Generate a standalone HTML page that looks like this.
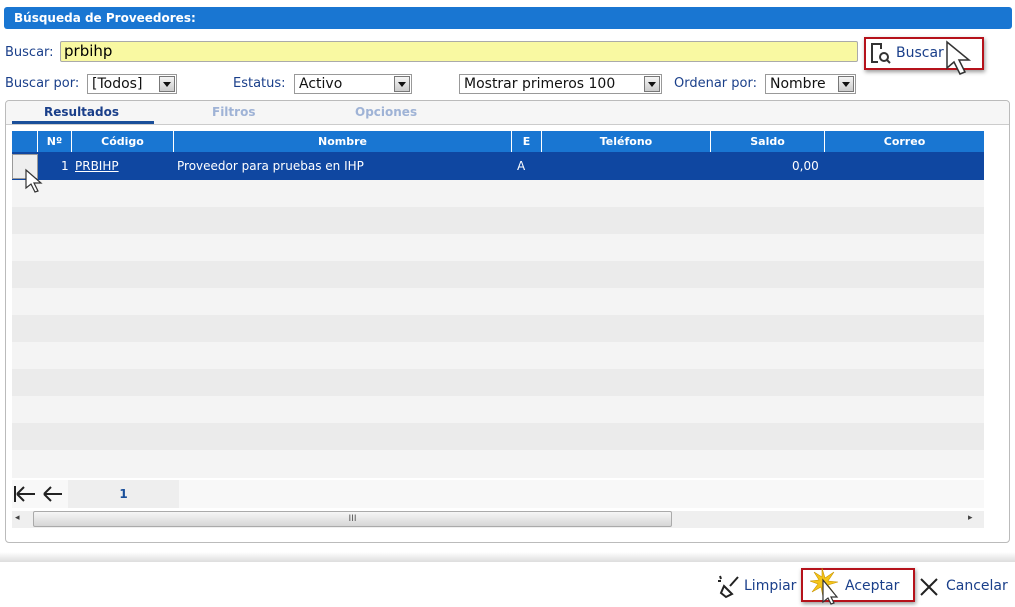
<!DOCTYPE html>
<html><head><meta charset="utf-8"><style>
body{margin:0;width:1015px;height:607px;background:#fff;font-family:Verdana,"DejaVu Sans",sans-serif;position:relative;overflow:hidden;font-size:13px}
.a{position:absolute}
.title{left:4px;top:7px;width:1008px;height:22px;background:#1976d2;border-radius:3px;color:#fff;font-weight:bold;font-size:12px;line-height:22px;text-indent:10px}
.lbl{color:#1a3f8a;font-size:13px}
.sel{border:1px solid #999;background:#fff;height:20px;font-size:14px;line-height:19px;padding-left:4px;box-sizing:border-box;color:#111}
.sel i{position:absolute;right:1px;top:1px;width:16px;height:16px;border:1px solid #777;background:linear-gradient(#f4f4f4,#ccc);box-sizing:border-box}
.sel i:after{content:"";position:absolute;left:3px;top:5px;border-left:4px solid transparent;border-right:4px solid transparent;border-top:5px solid #111}
.hdr div{position:absolute;top:131px;height:21px;background:#1976d2;color:#fff;font-weight:bold;font-size:11px;line-height:21px;text-align:center;border-right:1px solid #fff;box-sizing:border-box}
.row{position:absolute;left:12px;width:972px;height:27px}
</style></head><body>
<div class="a title">Búsqueda de Proveedores:</div>
<div class="a lbl" style="left:5px;top:45px">Buscar:</div>
<div class="a" style="left:60px;top:41px;width:798px;height:21px;background:#f9f9a2;border:1px solid #aaa;border-radius:2px;box-sizing:border-box;font-size:15px;line-height:19px;padding-left:3px">prbihp</div>
<div class="a" style="left:864px;top:37px;width:120px;height:33px;border:2px solid #b5121b;box-sizing:border-box;box-shadow:1px 2px 4px #999"></div>
<svg class="a" style="left:870px;top:42px" width="24" height="24" viewBox="0 0 24 24"><path d="M8 20H2V2h9v5" fill="none" stroke="#333" stroke-width="2"/><circle cx="14" cy="15" r="4" fill="none" stroke="#333" stroke-width="2"/><path d="M17 18l3 3" stroke="#333" stroke-width="2"/></svg>
<div class="a" style="left:896px;top:45px;color:#1a3f8a;font-size:14px">Buscar</div>
<svg class="a" style="left:944px;top:40px" width="34" height="38" viewBox="0 0 34 38"><path d="M3 2v26l7-6 6 12 5-2-6-12h10z" fill="#fff" stroke="#333" stroke-width="1.5"/></svg>
<div class="a lbl" style="left:5px;top:76px">Buscar por:</div>
<div class="a sel" style="left:87px;top:74px;width:90px">[Todos]<i></i></div>
<div class="a lbl" style="left:233px;top:76px">Estatus:</div>
<div class="a sel" style="left:294px;top:74px;width:118px">Activo<i></i></div>
<div class="a sel" style="left:459px;top:74px;width:203px">Mostrar primeros 100<i></i></div>
<div class="a lbl" style="left:674px;top:76px">Ordenar por:</div>
<div class="a sel" style="left:765px;top:74px;width:91px">Nombre<i></i></div>

<div class="a" style="left:5px;top:100px;width:1005px;height:443px;border:1px solid #bbb;border-radius:4px;box-sizing:border-box;background:#fff"></div>
<div class="a" style="left:6px;top:101px;width:1003px;height:23px;background:#f6f6f6;border-bottom:1px solid #ccc;border-radius:4px 4px 0 0"></div>
<div class="a" style="left:44px;top:105px;color:#1a3f8a;font-weight:bold;font-size:12px">Resultados</div>
<div class="a" style="left:12px;top:121px;width:142px;height:3px;background:#1a4f9a"></div>
<div class="a" style="left:212px;top:105px;color:#9fb3d6;font-weight:bold;font-size:12px">Filtros</div>
<div class="a" style="left:355px;top:105px;color:#9fb3d6;font-weight:bold;font-size:12px">Opciones</div>

<div class="hdr">
<div style="left:12px;width:26px"></div>
<div style="left:38px;width:34px">Nº</div>
<div style="left:72px;width:102px">Código</div>
<div style="left:174px;width:338px">Nombre</div>
<div style="left:512px;width:30px">E</div>
<div style="left:542px;width:169px">Teléfono</div>
<div style="left:711px;width:114px">Saldo</div>
<div style="left:825px;width:159px;border-right:0">Correo</div>
</div>
<div class="a" style="left:12px;top:152px;width:972px;height:28px;background:#0f47a1;color:#fff;font-size:12px;line-height:28px">
<div class="a" style="left:0;top:2px;width:26px;height:25px;background:#eee;border:1px solid #999;box-sizing:border-box"></div>
<span class="a" style="left:49px">1</span>
<span class="a" style="left:63px;text-decoration:underline">PRBIHP</span>
<span class="a" style="left:165px">Proveedor para pruebas en IHP</span>
<span class="a" style="left:505px">A</span>
<span class="a" style="left:780px">0,00</span>
</div>
<div class="row" style="top:180px;background:#f4f4f4"></div>
<div class="row" style="top:207px;background:#ebebeb"></div>
<div class="row" style="top:234px;background:#f4f4f4"></div>
<div class="row" style="top:261px;background:#ebebeb"></div>
<div class="row" style="top:288px;background:#f4f4f4"></div>
<div class="row" style="top:315px;background:#ebebeb"></div>
<div class="row" style="top:342px;background:#f4f4f4"></div>
<div class="row" style="top:369px;background:#ebebeb"></div>
<div class="row" style="top:396px;background:#f4f4f4"></div>
<div class="row" style="top:423px;background:#ebebeb"></div>
<div class="row" style="top:450px;background:#f4f4f4;height:28px"></div>
<svg class="a" style="left:24px;top:168px" width="20" height="28" viewBox="0 0 20 28"><path d="M2 2v18l5-4 4 8 3-1-4-8h7z" fill="#fff" stroke="#333" stroke-width="1.2"/></svg>
<div class="row" style="top:480px;background:#f8f8f8;height:28px"></div>
<div class="a" style="left:68px;top:480px;width:111px;height:28px;background:#eee;color:#1a4f9a;font-size:12px;font-weight:bold;text-align:center;line-height:28px">1</div>
<svg class="a" style="left:13px;top:484px" width="54" height="20" viewBox="0 0 54 20"><path d="M2 2v16M4 10h18M4 10l7-7M4 10l7 7M31 10h18M31 10l7-7M31 10l7 7" fill="none" stroke="#222" stroke-width="2"/></svg>
<div class="row" style="top:511px;height:17px;background:#efefef"></div>
<div class="a" style="left:33px;top:511px;width:639px;height:16px;border:1px solid #aaa;border-radius:2px;background:linear-gradient(#f6f6f6,#d6d6d6);box-sizing:border-box;text-align:center;font-size:9px;line-height:14px;color:#555">III</div>
<div class="a" style="left:15px;top:513px;font-size:9px;color:#444">◂</div>
<div class="a" style="left:968px;top:513px;font-size:9px;color:#444">▸</div>

<div class="a" style="left:0;top:552px;width:1015px;height:10px;background:linear-gradient(#fff,#ddd)"></div>
<svg class="a" style="left:716px;top:573px" width="26" height="26" viewBox="0 0 26 26"><path d="M4 3l1 3M2 8h3M22 4l-8 9M8 13l8 8-6 3-5-4z" fill="none" stroke="#222" stroke-width="2"/></svg>
<div class="a" style="left:744px;top:578px;color:#1a3f8a;font-size:14px">Limpiar</div>
<div class="a" style="left:801px;top:568px;width:114px;height:34px;border:2px solid #b5121b;box-sizing:border-box;box-shadow:1px 2px 4px #999"></div>
<svg class="a" style="left:810px;top:566px" width="34" height="40" viewBox="0 0 34 40"><path d="M12 2l3 10 9-6-6 9 10 1-10 3 6 8-9-6-2 10-2-10-9 5 6-8-8-3 9-1-5-8 8 5z" fill="#f5c518" stroke="#c89400" stroke-width=".6"/><path d="M13 14v22l5-4 3 6 3-1-3-6h6z" fill="#fff" stroke="#333" stroke-width="1.2"/></svg>
<div class="a" style="left:845px;top:578px;color:#1a3f8a;font-size:14px">Aceptar</div>
<svg class="a" style="left:919px;top:577px" width="20" height="20" viewBox="0 0 20 20"><path d="M2 2l16 16M18 2L2 18" stroke="#222" stroke-width="2"/></svg>
<div class="a" style="left:946px;top:578px;color:#1a3f8a;font-size:14px">Cancelar</div>
</body></html>
